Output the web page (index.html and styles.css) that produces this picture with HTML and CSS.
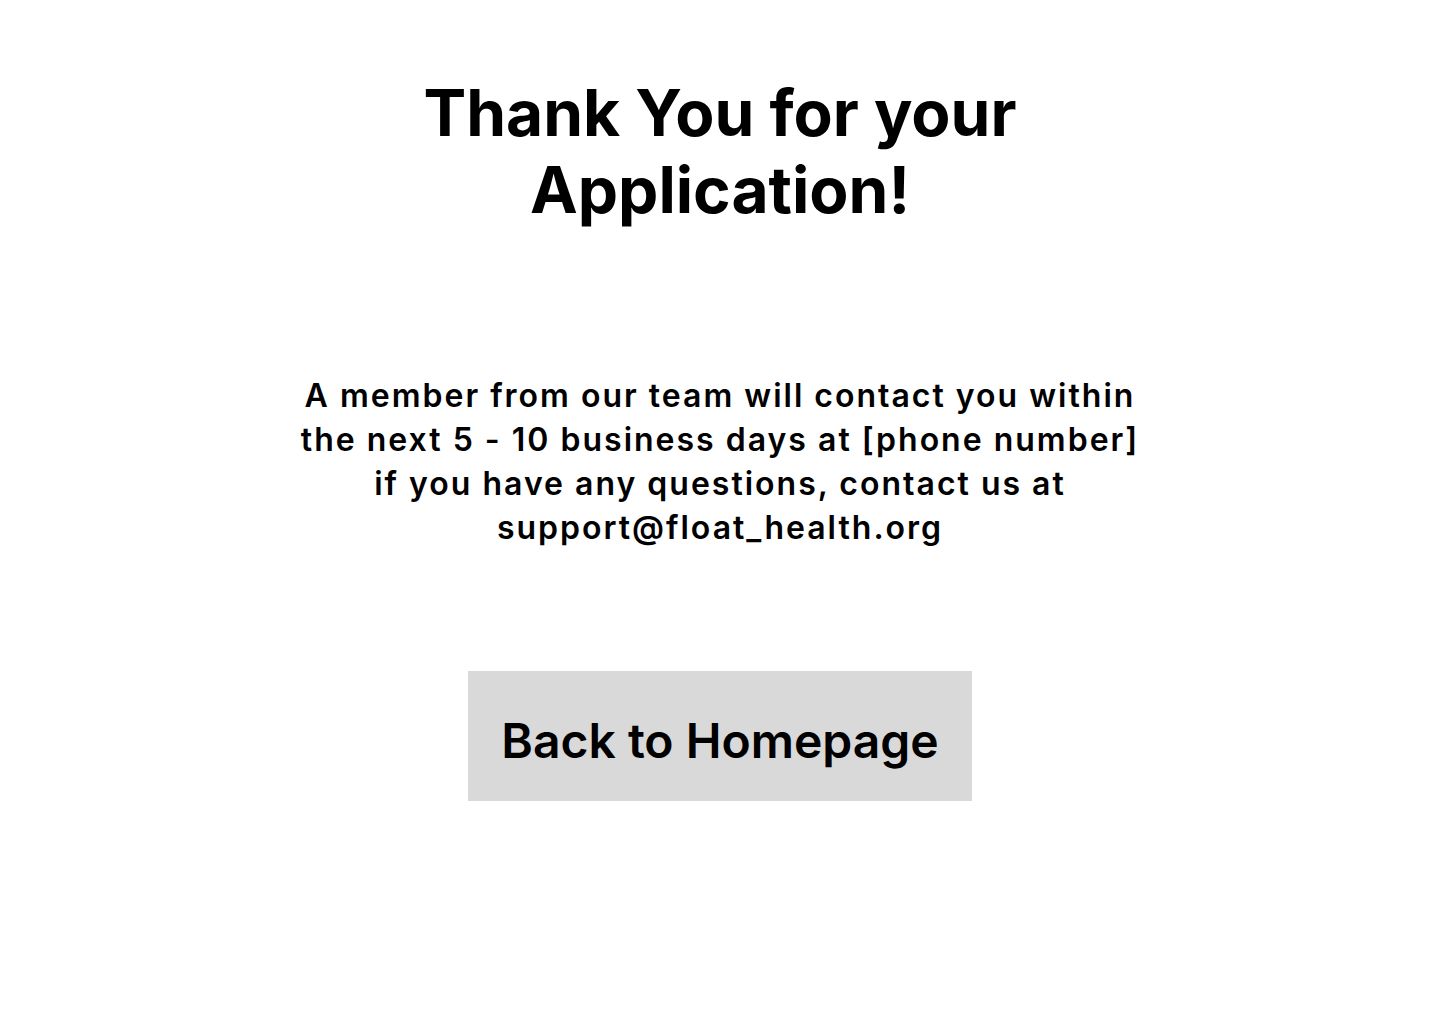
FILE: index.html
```html
<!DOCTYPE html>
<html lang="en">
<head>
<meta charset="utf-8">
<title>Thank You</title>
<link rel="stylesheet" href="styles.css">
</head>
<body>
<main class="page">
  <h1 class="title">Thank You for your Application!</h1>
  <p class="message">A member from our team will contact you within<br>the next 5 - 10 business days at [phone number]<br>if you have any questions, contact us at<br>support@float_health.org</p>
  <a class="home-btn" href="#">Back to Homepage</a>
</main>
</body>
</html>
```
FILE: styles.css
```css
* { box-sizing: border-box; }
html, body {
  margin: 0;
  padding: 0;
  background: #ffffff;
}
body {
  font-family: Inter, "Noto Sans", "Liberation Sans", sans-serif;
  color: #000000;
}
.page {
  display: flex;
  flex-direction: column;
  align-items: center;
  padding-top: 75px;
  text-align: center;
}
.title {
  margin: 0;
  max-width: 640px;
  font-size: 64px;
  font-weight: 700;
  line-height: 76.8px;
}
.message {
  margin: 145px 0 0;
  font-size: 32px;
  font-weight: 600;
  line-height: 44px;
  letter-spacing: 2px;
  font-variation-settings: "opsz" 14;
}
.home-btn {
  margin-top: 121px;
  width: 504px;
  height: 130px;
  padding-top: 41px;
  background: #d9d9d9;
  color: #000000;
  text-decoration: none;
  font-size: 48px;
  font-weight: 600;
  line-height: 58px;
  text-align: center;
  font-variation-settings: "opsz" 14;
}
```
